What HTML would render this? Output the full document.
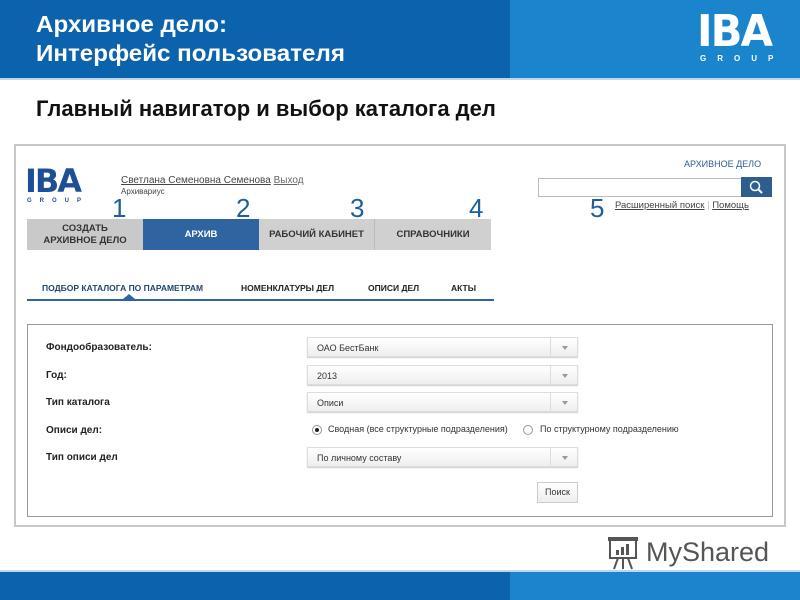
<!DOCTYPE html>
<html><head><meta charset="utf-8"><style>
*{margin:0;padding:0;box-sizing:border-box}
body{width:800px;height:600px;position:relative;background:#fff;font-family:"Liberation Sans",sans-serif;overflow:hidden}
.a{position:absolute}
.lbl{font-size:10px;font-weight:bold;color:#222;left:46px}
.sel{left:307px;width:271px;height:20px;border:1px solid #ddd;background:linear-gradient(#fff,#eee);font-size:9px;color:#333;padding:5px 9px;box-shadow:0 1px 1px #ccc}
.sel:after{content:"";position:absolute;right:0;top:0;width:26px;height:18px;border-left:1px solid #ddd}
.sel i{position:absolute;right:9px;top:8px;border:3px solid transparent;border-top:4px solid #999}
.num{font-size:26px;color:#1d5fa0;top:193px}
.tab{top:219px;height:31px;font-size:9.5px;font-weight:bold;color:#333;text-align:center;display:flex;align-items:center;justify-content:center;line-height:12px}
.st{top:283px;font-size:8.5px;font-weight:bold;color:#222}
.logo{font-weight:900;font-family:"DejaVu Sans","Liberation Sans",sans-serif;letter-spacing:-2px}
</style></head><body>
<div class="a" style="left:0;top:0;width:800px;height:78px;background:#0c63ad"></div>
<div class="a" style="left:510px;top:0;width:290px;height:78px;background:#1a84cc"></div>
<div class="a" style="left:0;top:78px;width:800px;height:2px;background:#bcd8ee"></div>
<div class="a" style="left:36px;top:10px;color:#fff;font-size:23px;font-weight:bold;line-height:29px;transform:scaleX(1.05);transform-origin:left">Архивное дело:<br>Интерфейс пользователя</div>
<div class="a logo" style="left:697px;top:9px;color:#fff;font-size:44px;line-height:46px;transform:scaleX(0.95);transform-origin:left">IBA</div>
<div class="a" style="left:700px;top:54px;color:#fff;font-size:8px;font-weight:bold;letter-spacing:11px">GROUP</div>
<div class="a" style="left:36px;top:96px;font-size:22px;font-weight:bold;color:#111;transform:scaleX(1.0);transform-origin:left">Главный навигатор и выбор каталога дел</div>

<div class="a" style="left:14px;top:144px;width:772px;height:383px;border:2px solid #c8c8c8"></div>
<div class="a logo" style="left:25px;top:164px;color:#1d4f96;font-size:32px;line-height:34px">IBA</div>
<div class="a" style="left:27px;top:198px;color:#1d4f96;font-size:6px;font-weight:bold;letter-spacing:8px">GROUP</div>
<div class="a" style="left:121px;top:175px;font-size:10px;color:#444"><u>Светлана Семеновна Семенова</u> <u style="color:#666">Выход</u></div>
<div class="a" style="left:121px;top:187px;font-size:8px;color:#444">Архивариус</div>
<div class="a" style="left:684px;top:159px;font-size:9px;color:#2a5f95">АРХИВНОЕ ДЕЛО</div>
<div class="a" style="left:538px;top:178px;width:204px;height:19px;border:1px solid #bbb"></div>
<div class="a" style="left:741px;top:177px;width:31px;height:20px;background:#2e5d8f"><svg width="31" height="20"><circle cx="14" cy="9" r="4.5" fill="none" stroke="#fff" stroke-width="1.5"/><line x1="17" y1="12" x2="21" y2="16" stroke="#fff" stroke-width="2"/></svg></div>
<div class="a" style="left:615px;top:200px;font-size:9.5px;color:#444"><u>Расширенный поиск</u> <span style="color:#bbb">|</span> <u>Помощь</u></div>
<div class="a num" style="left:112px">1</div>
<div class="a num" style="left:236px">2</div>
<div class="a num" style="left:350px">3</div>
<div class="a num" style="left:469px">4</div>
<div class="a num" style="left:590px">5</div>
<div class="a tab" style="left:27px;width:116px;background:#c9c9c9">СОЗДАТЬ<br>АРХИВНОЕ ДЕЛО</div>
<div class="a tab" style="left:143px;width:116px;background:#2f64a0;color:#fff">АРХИВ</div>
<div class="a tab" style="left:259px;width:116px;background:#d0d0d0;border-right:1px solid #bbb">РАБОЧИЙ КАБИНЕТ</div>
<div class="a tab" style="left:375px;width:116px;background:#d0d0d0">СПРАВОЧНИКИ</div>
<div class="a st" style="left:42px;color:#1f4675">ПОДБОР КАТАЛОГА ПО ПАРАМЕТРАМ</div>
<div class="a st" style="left:241px">НОМЕНКЛАТУРЫ ДЕЛ</div>
<div class="a st" style="left:368px">ОПИСИ ДЕЛ</div>
<div class="a st" style="left:451px">АКТЫ</div>
<div class="a" style="left:27px;top:299px;width:467px;height:2px;background:#2f64a0"></div>
<div class="a" style="left:123px;top:294px;border:6px solid transparent;border-bottom:5px solid #2f64a0;border-top:0"></div>

<div class="a" style="left:27px;top:324px;width:746px;height:193px;border:1px solid #999"></div>
<div class="a lbl" style="top:342px">Фондообразователь:</div>
<div class="a sel" style="top:337px">ОАО БестБанк<i></i></div>
<div class="a lbl" style="top:370px">Год:</div>
<div class="a sel" style="top:365px">2013<i></i></div>
<div class="a lbl" style="top:397px">Тип каталога</div>
<div class="a sel" style="top:392px">Описи<i></i></div>
<div class="a lbl" style="top:425px">Описи дел:</div>
<div class="a" style="left:312px;top:425px;width:10px;height:10px;border:1px solid #999;border-radius:50%"><div style="width:4px;height:4px;background:#222;border-radius:50%;margin:2px"></div></div>
<div class="a" style="left:328px;top:424px;font-size:9px;color:#333">Сводная (все структурные подразделения)</div>
<div class="a" style="left:523px;top:425px;width:10px;height:10px;border:1px solid #999;border-radius:50%"></div>
<div class="a" style="left:540px;top:424px;font-size:9px;color:#333">По структурному подразделению</div>
<div class="a lbl" style="top:452px">Тип описи дел</div>
<div class="a sel" style="top:447px">По личному составу<i></i></div>
<div class="a" style="left:537px;top:482px;width:41px;height:21px;border:1px solid #ccc;background:linear-gradient(#fff,#eee);font-size:9px;color:#333;text-align:center;line-height:19px">Поиск</div>

<svg class="a" style="left:606px;top:536px" width="36" height="34"><rect x="4" y="4" width="26" height="18" fill="none" stroke="#555" stroke-width="2"/><rect x="2" y="1" width="30" height="4" fill="#555"/><rect x="10" y="14" width="3" height="5" fill="#555"/><rect x="15" y="11" width="3" height="8" fill="#555"/><rect x="20" y="8" width="3" height="11" fill="#555"/><path d="M12 22 L8 33 M22 22 L26 33 M17 22 V33" stroke="#555" stroke-width="2"/></svg>
<div class="a" style="left:646px;top:537px;font-size:27px;color:#555">MyShared</div>
<div class="a" style="left:0;top:570px;width:800px;height:2px;background:#bcd8ee"></div>
<div class="a" style="left:0;top:572px;width:510px;height:28px;background:#0c63ad"></div>
<div class="a" style="left:510px;top:572px;width:290px;height:28px;background:#1a84cc"></div>
</body></html>
